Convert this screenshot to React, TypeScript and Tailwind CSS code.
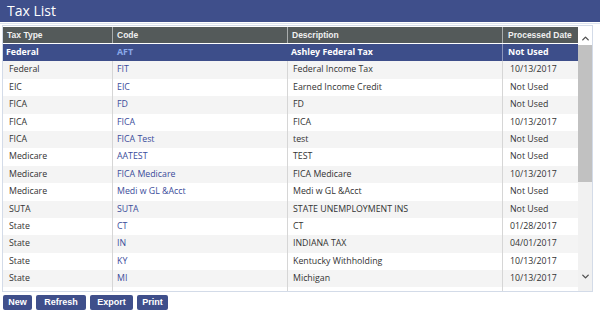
import { ChevronUp, ChevronDown } from 'lucide-react';

const rows = [
  { type: 'Federal', code: 'AFT', desc: 'Ashley Federal Tax', date: 'Not Used' },
  { type: 'Federal', code: 'FIT', desc: 'Federal Income Tax', date: '10/13/2017' },
  { type: 'EIC', code: 'EIC', desc: 'Earned Income Credit', date: 'Not Used' },
  { type: 'FICA', code: 'FD', desc: 'FD', date: 'Not Used' },
  { type: 'FICA', code: 'FICA', desc: 'FICA', date: '10/13/2017' },
  { type: 'FICA', code: 'FICA Test', desc: 'test', date: 'Not Used' },
  { type: 'Medicare', code: 'AATEST', desc: 'TEST', date: 'Not Used' },
  { type: 'Medicare', code: 'FICA Medicare', desc: 'FICA Medicare', date: '10/13/2017' },
  { type: 'Medicare', code: 'Medi w GL &Acct', desc: 'Medi w GL &Acct', date: 'Not Used' },
  { type: 'SUTA', code: 'SUTA', desc: 'STATE UNEMPLOYMENT INS', date: 'Not Used' },
  { type: 'State', code: 'CT', desc: 'CT', date: '01/28/2017' },
  { type: 'State', code: 'IN', desc: 'INDIANA TAX', date: '04/01/2017' },
  { type: 'State', code: 'KY', desc: 'Kentucky Withholding', date: '10/13/2017' },
  { type: 'State', code: 'MI', desc: 'Michigan', date: '10/13/2017' },
];

export default function App() {
  return (
    <div className="w-[600px] h-[311px] bg-white overflow-hidden font-['Open_Sans',sans-serif]">
      {/* title bar */}
      <div className="h-[22px] bg-[#3f4f8b] text-white text-[14px] leading-[22px] pl-[7px]">Tax List</div>
      <div className="h-[1px] mt-[1px] bg-[#dde4ef]" />

      <div className="ml-[2px] mr-[7px] mt-[1px] border border-[#d3dbe8] pt-[1px] flex">
        <div className="flex-1 flex flex-col">
          {/* header */}
          <div className="flex h-[16px] bg-[#545a5a] text-[#f0f0f0] text-[8.5px] font-bold leading-[16px] font-['Liberation_Sans',sans-serif]">
            <div className="w-[110px] pl-[4px] border-r border-[#a9adad]">Tax Type</div>
            <div className="w-[175px] pl-[4px] border-r border-[#a9adad]">Code</div>
            <div className="w-[215px] pl-[4px] border-r border-[#a9adad]">Description</div>
            <div className="flex-1 pl-[5px]">Processed Date</div>
          </div>
          <div className="h-[1px] bg-white" />
          {/* body */}
          <div className="flex flex-col h-[247px] text-[8.8px]">
            {rows.map((r, i) => {
              const sel = i === 0;
              const bg = sel ? 'bg-[#3d4e8a]' : i % 2 === 1 ? 'bg-[#f4f4f4]' : 'bg-white';
              return (
                <div key={i} className={`flex h-[17.4px] shrink-0 items-center ${bg} ${sel ? 'font-bold text-white' : 'text-[#333]'}`}>
                  <div className={`w-[110px] h-full flex items-center ${sel ? 'pl-[3px]' : 'pl-[6px]'} border-r ${sel ? 'border-[#3d4e8a]' : 'border-[#d6d6d6]'}`}>{r.type}</div>
                  <div className={`w-[175px] h-full flex items-center pl-[4px] border-r ${sel ? 'border-[#3d4e8a] text-[#8aa9ea]' : 'border-[#d6d6d6] text-[#3b4c9b]'}`}>{r.code}</div>
                  <div className={`w-[215px] h-full flex items-center ${sel ? 'pl-[3px]' : 'pl-[5px]'} border-r ${sel ? 'border-[#8c96bb]' : 'border-[#d6d6d6]'}`}>{r.desc}</div>
                  <div className={`flex-1 h-full flex items-center ${sel ? 'pl-[5px]' : 'pl-[7px]'}`}>{r.date}</div>
                </div>
              );
            })}
            <div className="flex flex-1">
              <div className="w-[110px] border-r border-[#d6d6d6]" />
              <div className="w-[175px] border-r border-[#d6d6d6]" />
              <div className="w-[215px] border-r border-[#d6d6d6]" />
              <div className="flex-1" />
            </div>
          </div>
        </div>
        {/* scrollbar */}
        <div className="w-[14px] flex flex-col bg-[#f1f1f1]">
          <div className="h-[18px] bg-white flex items-end justify-center pb-[1px]">
            <ChevronUp className="w-[11px] h-[11px] text-[#505050]" strokeWidth={3} />
          </div>
          <div className="h-[137px] bg-[#c1c1c1]" />
          <div className="flex-1" />
          <div className="h-[20px] flex items-start justify-center">
            <ChevronDown className="w-[11px] h-[11px] text-[#505050]" strokeWidth={3} />
          </div>
        </div>
      </div>

      {/* buttons */}
      <div className="flex gap-[4px] pl-[3px] mt-[3px] font-['Liberation_Sans',sans-serif] text-[9px] font-bold text-white">
        <button className="w-[29px] h-[15px] bg-[#3f4f8b] rounded-[2px]">New</button>
        <button className="w-[50px] h-[15px] bg-[#3f4f8b] rounded-[2px]">Refresh</button>
        <button className="w-[43px] h-[15px] bg-[#3f4f8b] rounded-[2px]">Export</button>
        <button className="w-[31px] h-[15px] bg-[#3f4f8b] rounded-[2px]">Print</button>
      </div>
    </div>
  );
}
